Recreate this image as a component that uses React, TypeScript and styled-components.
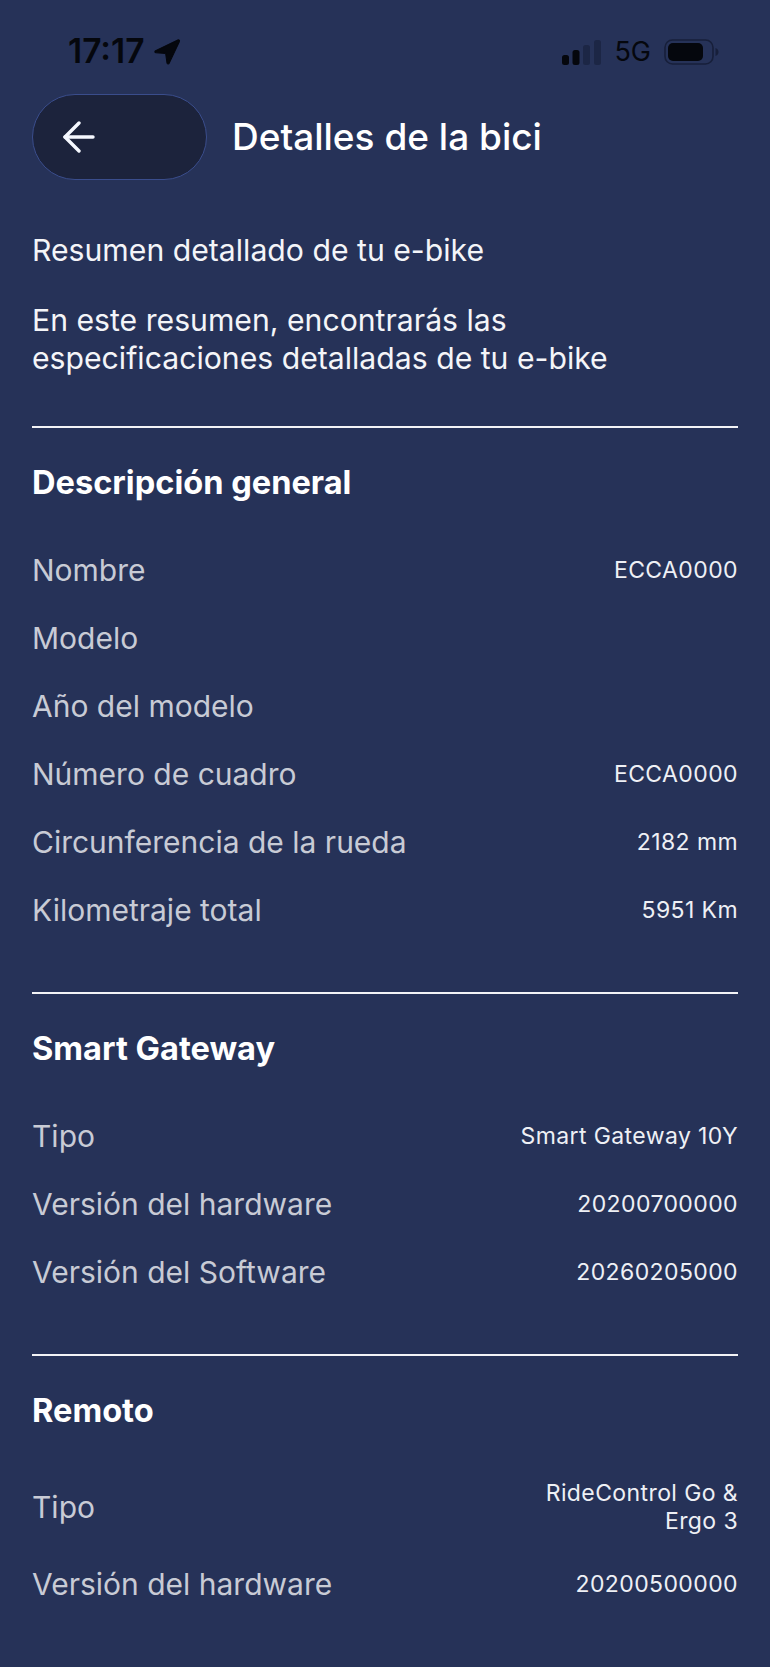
import styled, { createGlobalStyle } from 'styled-components'

const GlobalStyle = createGlobalStyle`
    html, body {
        margin: 0;
        padding: 0;
        background: #263258;
    }
`

const Screen = styled.div`
    width: 770px;
    height: 1667px;
    overflow: hidden;
    background: #263258;
    font-family: Inter, "Liberation Sans", sans-serif;
    color: #fff;
`

const StatusBar = styled.div`
    height: 94px;
    padding: 33px 51px 0 68px;
    box-sizing: border-box;
    display: flex;
    justify-content: space-between;
    align-items: flex-start;
    color: #05070d;
`

const StatusLeft = styled.div`
    display: flex;
    align-items: center;
    gap: 9px;
`

const Clock = styled.span`
    font-size: 33.5px;
    line-height: 36px;
    font-weight: 600;
`

const StatusRight = styled.div`
    display: flex;
    align-items: center;
    gap: 13px;
    padding-top: 5px;
`

const Network = styled.span`
    font-size: 27px;
    line-height: 28px;
    font-weight: 400;
`

const Header = styled.div`
    display: flex;
    align-items: center;
    gap: 25px;
    padding-left: 32px;
`

const BackButton = styled.button`
    width: 175px;
    height: 86px;
    box-sizing: border-box;
    padding: 0 0 0 30px;
    display: flex;
    align-items: center;
    background: #1c233c;
    border: 1.5px solid #3a4d8c;
    border-radius: 43px;
`

const Title = styled.h1`
    margin: 0;
    font-size: 37px;
    line-height: 42px;
    font-weight: 500;
    color: #fff;
`

const Intro = styled.div`
    padding: 51px 32px 0;
`

const IntroText = styled.p<{ $gap?: number }>`
    margin: 0 0 ${(p) => p.$gap ?? 0}px;
    font-size: 30.2px;
    line-height: 38px;
    font-weight: 400;
    color: #f4f5f8;
`

const Section = styled.section`
    margin: 0 32px;
    border-top: 2px solid #f2f3f6;
`

const SectionTitle = styled.h2`
    margin: 0;
    padding-top: 34px;
    font-size: 32.6px;
    line-height: 40px;
    font-weight: 700;
    color: #fff;
`

const Rows = styled.div<{ $gap: number }>`
    padding-top: 34px;
    padding-bottom: ${(p) => p.$gap}px;
`

const Row = styled.div<{ $tall?: boolean }>`
    display: flex;
    justify-content: space-between;
    align-items: center;
    min-height: 68px;
    padding: ${(p) => (p.$tall ? 9 : 0)}px 0;
`

const Label = styled.span`
    font-size: 30px;
    line-height: 38px;
    font-weight: 400;
    color: #c8cbd5;
`

const Value = styled.span`
    max-width: 220px;
    font-size: 23px;
    line-height: 28px;
    font-weight: 400;
    letter-spacing: 0.4px;
    text-align: right;
    color: #eef0f5;
`

const sections = [
    {
        title: 'Descripción general',
        gap: 48,
        rows: [
            ['Nombre', 'ECCA0000'],
            ['Modelo', ''],
            ['Año del modelo', ''],
            ['Número de cuadro', 'ECCA0000'],
            ['Circunferencia de la rueda', '2182 mm'],
            ['Kilometraje total', '5951 Km'],
        ],
    },
    {
        title: 'Smart Gateway',
        gap: 48,
        rows: [
            ['Tipo', 'Smart Gateway 10Y'],
            ['Versión del hardware', '20200700000'],
            ['Versión del Software', '20260205000'],
        ],
    },
    {
        title: 'Remoto',
        gap: 0,
        rows: [
            ['Tipo', 'RideControl Go & Ergo 3'],
            ['Versión del hardware', '20200500000'],
        ],
    },
]

function LocationIcon() {
    return (
        <svg width="27" height="27" viewBox="0 0 26 26">
            <path d="M1.500 12.200 23 1.800c1-.4 1.900.5 1.500 1.500L14.600 24.400c-.5 1-1.900.8-2.100-.3l-1.200-8.600c0-.4-.3-.6-.6-.7l-8.800-.5c-1.200-.2-1.500-1.500-.4-2.100Z" fill="#05070d" stroke="#05070d" strokeWidth="1" />
        </svg>
    )
}

function SignalIcon() {
    return (
        <svg width="39" height="25" viewBox="0 0 39 25">
            <rect x="0" y="15" width="7" height="10" rx="2.500" fill="#05070d" />
            <rect x="10.500" y="10" width="7" height="15" rx="2.500" fill="#05070d" />
            <rect x="21" y="5" width="7" height="20" rx="2.500" fill="#1c2645" />
            <rect x="32" y="0" width="7" height="25" rx="2.500" fill="#1c2645" />
        </svg>
    )
}

function BatteryIcon() {
    return (
        <svg width="55" height="26" viewBox="0 0 55 26">
            <rect x="1" y="1" width="48" height="24" rx="7.500" fill="none" stroke="#171f3a" strokeWidth="1.600" />
            <rect x="4" y="4" width="35" height="18" rx="5" fill="#05070d" />
            <path d="M51.500 9c2 .7 3 2.200 3 4s-1 3.300-3 4Z" fill="#171f3a" />
        </svg>
    )
}

function BackArrow() {
    return (
        <svg width="32" height="32" viewBox="0 0 32 32" fill="none" stroke="#f5f8ff" strokeWidth="3.400" strokeLinecap="round" strokeLinejoin="round">
            <path d="M2 16h28" />
            <path d="M16 2 2 16l14 14" />
        </svg>
    )
}

export default function App() {
    return <Screen>
        <GlobalStyle />
        <StatusBar>
            <StatusLeft>
                <Clock>17:17</Clock>
                <LocationIcon />
            </StatusLeft>
            <StatusRight>
                <SignalIcon />
                <Network>5G</Network>
                <BatteryIcon />
            </StatusRight>
        </StatusBar>
        <Header>
            <BackButton aria-label="Volver">
                <BackArrow />
            </BackButton>
            <Title>Detalles de la bici</Title>
        </Header>
        <Intro>
            <IntroText $gap={32}>Resumen detallado de tu e-bike</IntroText>
            <IntroText $gap={49}>En este resumen, encontrarás las especificaciones detalladas de tu e-bike</IntroText>
        </Intro>
        {sections.map(({ title, gap, rows }) => {
            return <Section key={title}>
                <SectionTitle>{title}</SectionTitle>
                <Rows $gap={gap}>
                    {rows.map(([label, value]) => {
                        return <Row key={label} $tall={value.length > 20}>
                            <Label>{label}</Label>
                            <Value>{value}</Value>
                        </Row>
                    })}
                </Rows>
            </Section>
        })}
    </Screen>
}
